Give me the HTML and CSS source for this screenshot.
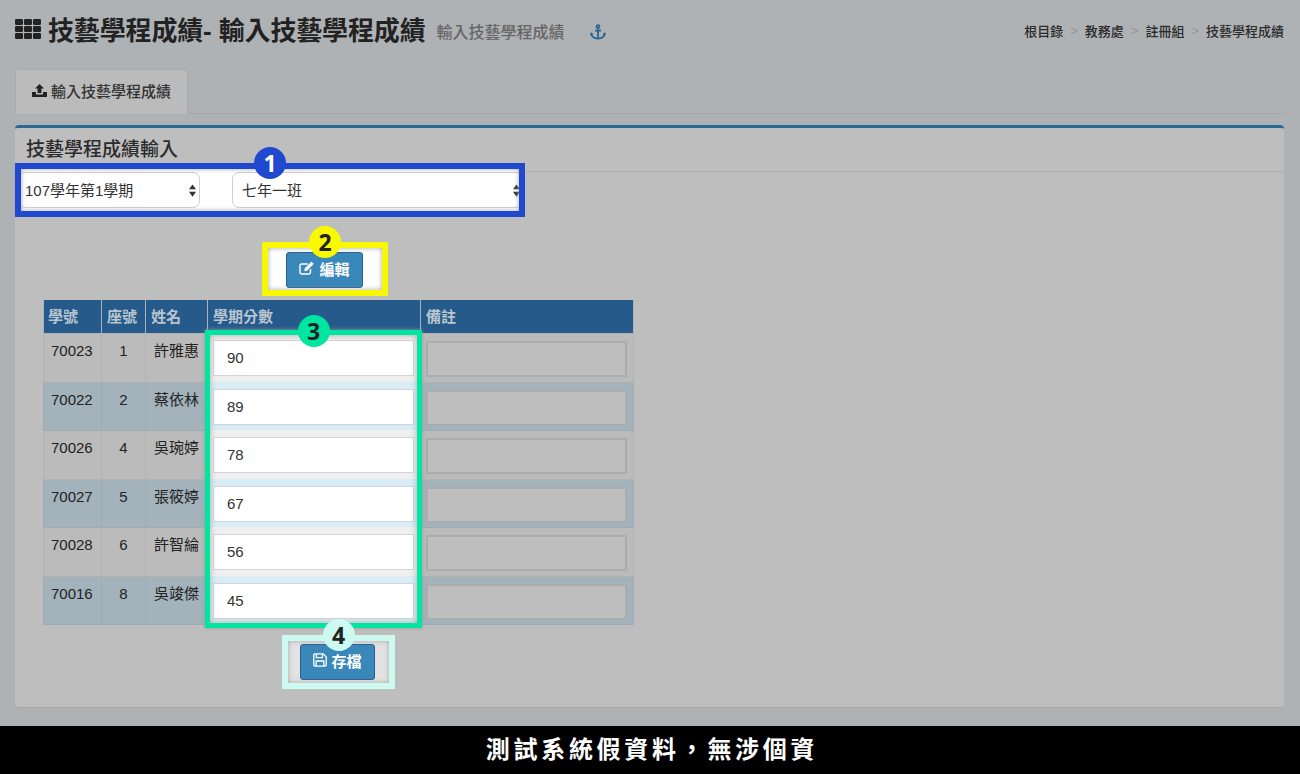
FILE: index.html
```html
<!DOCTYPE html>
<html>
<head>
  <title>技藝學程成績</title>
  <link rel="stylesheet" href="styles.css">
</head>
<body>
  <div class="page">
    <div class="top">
      <div class="title-wrap">
        <svg class="th-icon" viewBox="0 0 26 20" width="26" height="20" fill="#222">
          <rect x="0" y="0" width="8" height="6" rx="1.2"/><rect x="9" y="0" width="8" height="6" rx="1.2"/><rect x="18" y="0" width="8" height="6" rx="1.2"/>
          <rect x="0" y="7" width="8" height="6" rx="1.2"/><rect x="9" y="7" width="8" height="6" rx="1.2"/><rect x="18" y="7" width="8" height="6" rx="1.2"/>
          <rect x="0" y="14" width="8" height="6" rx="1.2"/><rect x="9" y="14" width="8" height="6" rx="1.2"/><rect x="18" y="14" width="8" height="6" rx="1.2"/>
        </svg>
        <h1>技藝學程成績- 輸入技藝學程成績</h1>
        <span class="subtitle">輸入技藝學程成績</span>
        <svg class="anchor" viewBox="0 0 16 16" width="16" height="16" fill="none" stroke="#2a6496" stroke-width="1.8">
          <circle cx="8" cy="2.6" r="1.5"/>
          <path d="M8 4v10.5M5 6.6h6"/>
          <path d="M1.2 9.4c.3 3 3.2 5 6.8 5.2 3.6-.2 6.5-2.2 6.8-5.2"/>
          <path d="M.4 10.6l.9-2 1.6 1.7zM15.6 10.6l-.9-2-1.6 1.7z" fill="#2a6496" stroke-width=".6"/>
        </svg>
      </div>
      <div class="crumbs">
        <span>根目錄</span><i>&gt;</i><span>教務處</span><i>&gt;</i><span>註冊組</span><i>&gt;</i><span>技藝學程成績</span>
      </div>
    </div>

    <div class="tabs">
      <div class="tab">
        <svg viewBox="0 0 15 13" width="15" height="13" fill="#222">
          <path d="M7.5 0L12 4.6H9.4V9H5.6V4.6H3z"/>
          <path d="M0 8h4v2.4h7V8h4v5H0z"/>
        </svg>
        輸入技藝學程成績
      </div>
    </div>

    <div class="panel">
      <div class="panel-head">技藝學程成績輸入</div>

      <div class="spot spot-blue">
        <span class="badge badge-blue">1</span>
        <div class="sel sel-term">
          <select><option>107學年第1學期</option></select>
          <svg viewBox="0 0 8 14" width="7" height="13" fill="#333"><path d="M4 0l4 5.500H0zM4 14L0 8.500h8z"/></svg>
        </div>
        <div class="sel sel-class">
          <select><option>七年一班</option></select>
          <svg viewBox="0 0 8 14" width="7" height="13" fill="#333"><path d="M4 0l4 5.500H0zM4 14L0 8.500h8z"/></svg>
        </div>
      </div>

      <div class="spot spot-yellow">
        <span class="badge badge-yellow">2</span>
        <button class="btn">
          <svg viewBox="0 0 16 14" width="16" height="14" fill="none" stroke="#fff" stroke-width="1.4">
            <path d="M11.5 8v3.2a1.8 1.8 0 0 1-1.8 1.8H2.8A1.8 1.8 0 0 1 1 11.2V4.8A1.8 1.8 0 0 1 2.8 3h6"/>
            <path d="M5.6 9.8l.6-2.6L12.4 1l2 2-6.2 6.2z" fill="#fff" stroke-width=".6"/>
          </svg>
          編輯
        </button>
      </div>

      <div class="table-wrap">
        <table class="grades">
          <colgroup>
            <col class="c-id"><col class="c-seat"><col class="c-name"><col class="c-score"><col class="c-note">
          </colgroup>
          <thead>
            <tr><th>學號</th><th>座號</th><th>姓名</th><th>學期分數</th><th>備註</th></tr>
          </thead>
          <tbody>
            <tr><td>70023</td><td class="mid">1</td><td>許雅惠</td><td class="lit"><input value="90"></td><td><input class="note"></td></tr>
            <tr><td>70022</td><td class="mid">2</td><td>蔡依林</td><td class="lit"><input value="89"></td><td><input class="note"></td></tr>
            <tr><td>70026</td><td class="mid">4</td><td>吳琬婷</td><td class="lit"><input value="78"></td><td><input class="note"></td></tr>
            <tr><td>70027</td><td class="mid">5</td><td>張筱婷</td><td class="lit"><input value="67"></td><td><input class="note"></td></tr>
            <tr><td>70028</td><td class="mid">6</td><td>許智綸</td><td class="lit"><input value="56"></td><td><input class="note"></td></tr>
            <tr><td>70016</td><td class="mid">8</td><td>吳竣傑</td><td class="lit"><input value="45"></td><td><input class="note"></td></tr>
          </tbody>
        </table>
        <div class="green-frame"><span class="badge badge-green">3</span></div>
      </div>

      <div class="spot spot-mint">
        <span class="badge badge-mint">4</span>
        <button class="btn btn-save">
          <svg viewBox="0 0 14 14" width="14" height="14" fill="none" stroke="#fff" stroke-width="1.3">
            <path d="M1.6.8h8.6l3 3v8a1.4 1.4 0 0 1-1.4 1.4H2.2A1.4 1.4 0 0 1 .8 11.800V1.600z"/>
            <path d="M3.400 1v3.600h6V1M3.200 13V8h7.600v5"/>
          </svg>
          存檔
        </button>
      </div>
    </div>
  </div>

  <div class="notice">測試系統假資料，無涉個資</div>
</body>
</html>
```

FILE: styles.css
```css
* {
  box-sizing: border-box;
}

html, body {
  height: 100%;
}

body {
  margin: 0;
  display: flex;
  flex-direction: column;
  background-color: #aeb2b5;
  color: #222;
  font-family: "Liberation Sans", "Noto Sans CJK TC", sans-serif;
  font-size: 15px;
}

.page {
  flex: 1;
  padding: 0 16px 0 15px;
}

.top {
  display: flex;
  justify-content: space-between;
  align-items: center;
  height: 58px;
  padding-bottom: 2px;
}

.title-wrap {
  display: flex;
  align-items: center;
}

.th-icon {
  margin-right: 7px;
  margin-top: 2px;
}

h1 {
  margin: 0;
  font-size: 26px;
  font-weight: 700;
  letter-spacing: -0.15px;
  color: #222;
}

.subtitle {
  margin-left: 11px;
  margin-top: 5px;
  font-size: 16px;
  font-weight: 500;
  color: #666;
}

.anchor {
  margin-left: 25px;
  margin-top: 7px;
}

.crumbs {
  display: flex;
  align-items: center;
  margin-top: 4px;
  font-size: 13px;
  font-weight: 500;
  color: #2b2b2b;
}

.crumbs i {
  margin: 0 7px;
  color: #949799;
  font-style: normal;
}

.tabs {
  margin-top: 11px;
  height: 45px;
  border-bottom: 1px solid #a3a7aa;
}

.tab {
  display: inline-flex;
  align-items: center;
  gap: 4px;
  width: 173px;
  height: 45px;
  padding: 0 0 4px 16px;
  background-color: #bbbbbb;
  border: 1px solid #a8abae;
  border-bottom: none;
  border-radius: 4px 4px 0 0;
  font-size: 15px;
  font-weight: 500;
  color: #333;
}

.panel {
  margin-top: 11px;
  height: 583px;
  background-color: #bebebe;
  border-top: 3px solid #2a6a94;
  border-bottom: 1px solid #a6a6a6;
  border-radius: 4px;
}

.panel-head {
  height: 44px;
  padding: 6px 11px 0;
  border-bottom: 1px solid #b0b0b0;
  font-size: 19px;
  font-weight: 500;
  color: #2b2b2b;
}

/* annotation frames */
.spot {
  position: relative;
  background-color: #fff;
}

.spot::after {
  content: "";
  position: absolute;
  top: 0;
  right: 0;
  bottom: 0;
  left: 0;
  border: 6px solid;
  box-shadow: inset 0 0 5px #a8a8a8;
  pointer-events: none;
}

.badge {
  position: absolute;
  z-index: 2;
  top: -16px;
  left: 50%;
  width: 32px;
  height: 32px;
  margin-left: -16px;
  border-radius: 50%;
  font-family: "Open Sans", "Liberation Sans", sans-serif;
  font-size: 23px;
  font-weight: 700;
  line-height: 32px;
  text-align: center;
  color: #222;
}

.badge-blue { background-color: #2049d0; color: #fff; }
.badge-yellow { background-color: #f8f800; }
.badge-green { top: -20px; background-color: #00e5a0; }
.badge-mint { background-color: #ccfaf0; }

.spot-blue {
  display: flex;
  align-items: center;
  width: 510px;
  height: 54px;
  margin-top: -9px;
  padding-left: 3px;
}

.spot-blue::after { border-color: #2049d0; }

.sel {
  position: relative;
  height: 36px;
}

.sel select {
  appearance: none;
  width: 100%;
  height: 100%;
  padding: 0 0 0 6px;
  background-color: #fff;
  border: 1px solid #cfcfd8;
  border-radius: 7px;
  font-family: inherit;
  font-size: 15px;
  color: #333;
}

.sel svg {
  position: absolute;
  top: 12px;
  right: 4px;
}

.sel-term {
  width: 182px;
}

.sel-class {
  width: 292px;
  margin-left: 32px;
}

.sel-class select {
  padding-left: 9px;
}

.spot-yellow {
  display: flex;
  align-items: center;
  justify-content: center;
  width: 126px;
  height: 54px;
  margin: 25px 0 0 247px;
  padding: 1px 1px 0 0;
}

.spot-yellow::after { border-color: #f8f800; }

.spot-mint {
  display: flex;
  align-items: center;
  justify-content: center;
  width: 113px;
  height: 54px;
  margin: 10px 0 0 267px;
  padding-right: 2px;
  background-color: #e2e2e2;
}

.spot-mint::after { border-color: #ccfaf0; }

.btn {
  display: inline-flex;
  align-items: center;
  justify-content: center;
  gap: 4px;
  width: 77px;
  height: 36px;
  padding: 0 0 3px;
  background-color: #3a87b9;
  border: 1px solid #27608f;
  border-radius: 3px;
  font-family: inherit;
  font-size: 15px;
  font-weight: 700;
  color: #fff;
}

.btn-save {
  width: 75px;
}

.table-wrap {
  position: relative;
  width: 590px;
  margin: 4px 0 0 28px;
}

.grades {
  width: 590px;
  table-layout: fixed;
  border-collapse: collapse;
}

.c-id { width: 58px; }
.c-seat { width: 44px; }
.c-name { width: 62px; }
.c-score { width: 213px; }
.c-note { width: 213px; }

.grades th {
  height: 33px;
  padding: 0 5px 2px;
  background-color: #255a8a;
  border: 1px solid #a9b4bc;
  border-top: none;
  border-bottom: none;
  font-size: 15px;
  font-weight: 700;
  text-align: left;
  color: #b9c5cf;
}

.grades th:first-child {
  padding-left: 4px;
}

.grades td {
  height: 49px;
  padding: 6px 8px 0;
  vertical-align: top;
  background-color: #bbbbbb;
  border: 1px solid #b2b2b2;
  font-size: 15px;
  line-height: 21px;
  color: #222;
}

.grades td:first-child {
  padding-left: 7px;
}

.grades td.mid {
  text-align: center;
}

.grades tbody tr:nth-child(even) td {
  height: 48px;
  background-color: #a3b2bb;
  border-color: #9dabb4;
}

.grades td.lit {
  padding: 7px 6px 0 5px;
  background-color: #efefef;
  border-top: none;
  border-bottom: none;
}

.grades tbody tr:nth-child(even) td.lit {
  background-color: #d9edf7;
}

.grades input {
  display: block;
  width: 100%;
  height: 36px;
  padding: 0 13px 2px;
  background-color: #fff;
  border: 1px solid #d4d4dc;
  font-family: inherit;
  font-size: 15px;
  color: #333;
}

.grades td:last-child {
  padding: 7px 6px 0 5px;
}

.grades input.note {
  background-color: #bebebe;
  border: 2px solid #aaacae;
}

.green-frame {
  position: absolute;
  top: 30px;
  left: 162px;
  width: 217px;
  height: 298px;
  border: 5px solid #00e5a0;
  box-shadow: inset 0 0 6px #a8a8a8, 0 0 4px #9a9a9a;
  pointer-events: none;
}

.notice {
  height: 48px;
  padding-left: 4px;
  background-color: #000;
  font-size: 24px;
  font-weight: 700;
  line-height: 48px;
  letter-spacing: 3.7px;
  text-align: center;
  color: #fff;
}
```
